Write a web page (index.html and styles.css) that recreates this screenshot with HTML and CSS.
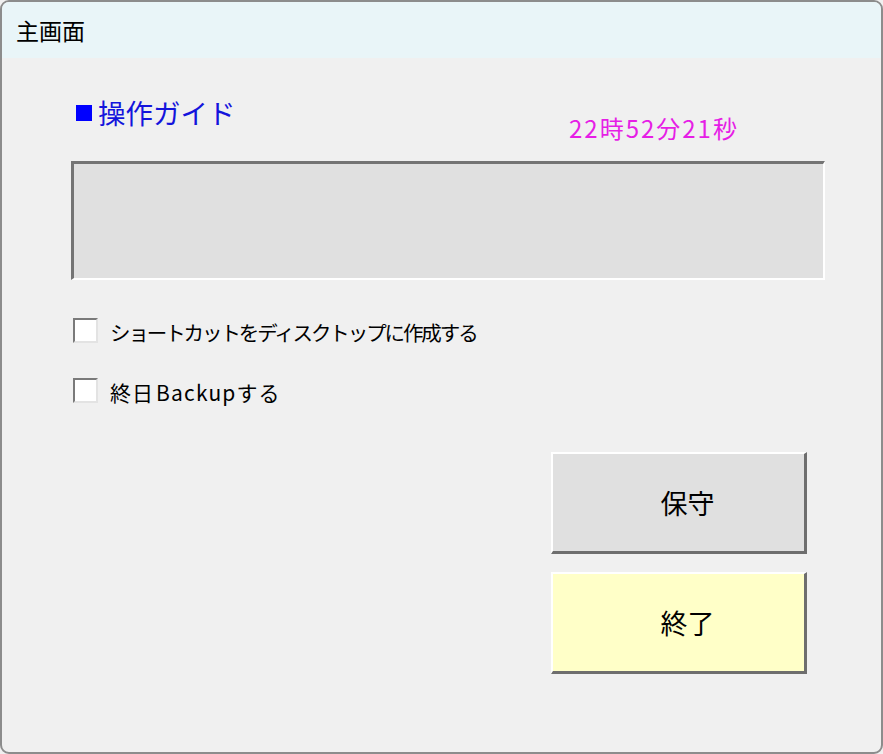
FILE: index.html
```html
<!DOCTYPE html>
<html lang="ja">
<head>
<meta charset="utf-8">
<title>主画面</title>
<link rel="stylesheet" href="styles.css">
</head>
<body>
<div class="window">
  <div class="titlebar">主画面</div>
  <div class="content">
    <div class="guide-row">
      <div class="guide-title"><span class="square"></span>操作ガイド</div>
      <div class="clock">22時52分21秒</div>
    </div>
    <div class="guide-box"></div>
    <div class="checks">
      <label class="check-row"><span class="checkbox"></span><span class="check-label narrow">ショートカットをディスクトップに作成する</span></label>
      <label class="check-row"><span class="checkbox"></span><span class="check-label"><span class="wide-cjk">終日</span><span class="latin">Backup</span><span class="wide-cjk">する</span></span></label>
    </div>
    <div class="buttons">
      <div class="btn btn-gray">保守</div>
      <div class="btn btn-yellow">終了</div>
    </div>
  </div>
</div>
</body>
</html>
```
FILE: styles.css
```css
html, body {
  margin: 0;
  padding: 0;
  background: #f0f0f0;
}
body {
  font-family: "Noto Sans CJK JP", "Noto Sans", sans-serif;
  color: #000;
}
.window {
  width: 883px;
  height: 754px;
  box-sizing: border-box;
  border: 2px solid #8c8c8c;
  border-radius: 9px;
  overflow: hidden;
  background: #f0f0f0;
}
.titlebar {
  height: 56px;
  line-height: 56px;
  background: #e9f5f8;
  padding-left: 14px;
  font-size: 23px;
}
.content {
  padding-left: 69px;
}
.guide-row {
  margin-top: 38px;
  height: 65px;
  display: grid;
  grid-template-columns: 498px auto;
  align-items: start;
}
.guide-title {
  padding-left: 5px;
  font-size: 27.5px;
  line-height: 32px;
  color: #1414dc;
  display: flex;
  align-items: center;
}
.square {
  display: inline-block;
  width: 16px;
  height: 16px;
  background: #0000ff;
  margin-right: 6px;
  margin-top: 2px;
}
.clock {
  margin-top: 16px;
  font-size: 24px;
  line-height: 32px;
  color: #e61ee6;
  letter-spacing: 2px;
}
.guide-box {
  width: 754px;
  height: 119px;
  box-sizing: border-box;
  background: #e0e0e0;
  border-style: solid;
  border-width: 3px 2px 2px 3px;
  border-color: #747474 #ffffff #ffffff #747474;
}
.checks {
  margin-top: 38px;
  display: flex;
  flex-direction: column;
  gap: 35px;
}
.check-row {
  display: flex;
  align-items: center;
  height: 25px;
}
.checkbox {
  width: 25px;
  height: 25px;
  box-sizing: border-box;
  margin-left: 2px;
  background: #ffffff;
  border-style: solid;
  border-width: 2px;
  border-color: #7a7a7a #e3e3e3 #e3e3e3 #7a7a7a;
}
.check-label {
  margin-left: 12px;
  font-size: 21px;
  line-height: 25px;
  padding-top: 4px;
  white-space: nowrap;
}
.narrow {
  font-size: 20.5px;
  letter-spacing: -2.1px;
}
.wide-cjk {
  letter-spacing: 1px;
}
.latin {
  letter-spacing: 1.2px;
  margin-left: 2px;
}
.buttons {
  margin-top: 49px;
  margin-left: 480px;
  display: flex;
  flex-direction: column;
  gap: 18px;
}
.btn {
  width: 256px;
  height: 102px;
  box-sizing: border-box;
  border-style: solid;
  border-width: 2px 3px 3px 2px;
  border-color: #ffffff #6e6e6e #6e6e6e #ffffff;
  display: flex;
  align-items: center;
  justify-content: center;
  padding-left: 18px;
  font-size: 27px;
}
.btn-gray {
  background: #e0e0e0;
}
.btn-yellow {
  background: #ffffc8;
}
```
